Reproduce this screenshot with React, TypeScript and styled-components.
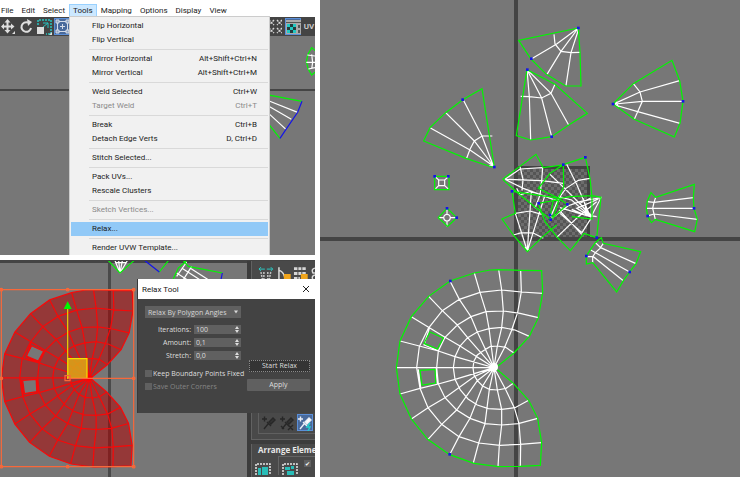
import React from "react";
import styled, { createGlobalStyle, css } from "styled-components";

const GlobalStyle = createGlobalStyle`
  * { box-sizing: border-box; }
  body { margin: 0; background: #fff; font-family: Roboto, "Noto Sans", sans-serif; font-size: 8px; color: #1c1c1c; }
  button, input, select { font: inherit; color: inherit; }
`;

const Page = styled.main`
  display: grid;
  grid-template-columns: minmax(0, 3fr) minmax(0, 4fr);
  grid-template-rows: 255px minmax(217px, 1fr);
  gap: 5px;
  min-height: 100vh;
`;
const EditorWindow = styled.section`
  position: relative;
  display: flex;
  flex-direction: column;
  overflow: hidden;
`;
const MenuBar = styled.nav`
  display: flex;
  height: 17px;
  padding-top: 4px;
  background: #fff;
`;
const MenuTitle = styled.button<{ $open?: boolean }>`
  height: 13px;
  padding: 0 3px;
  border: 1px solid transparent;
  background: none;
  line-height: 11px;
  white-space: nowrap;
  &:first-child { padding-left: 0; }
  ${(p) => p.$open && css`background: #cce8ff; border-color: #99d1ff;`}
`;
const Toolbar = styled.div`
  display: flex;
  align-items: center;
  justify-content: space-between;
  height: 19px;
  background: #444;
  color: #d2d2d2;
`;
const ToolGroup = styled.div`
  display: flex;
  align-items: center;
  gap: 2px;
`;
const ToolButton = styled.button<{ $active?: boolean; $text?: boolean }>`
  display: flex;
  align-items: center;
  justify-content: center;
  width: ${(p) => (p.$text ? "12px" : "16px")};
  height: 17px;
  padding: 0;
  border: 1px solid ${(p) => (p.$active ? "#5b8fd8" : "transparent")};
  background: ${(p) => (p.$active ? "#496a9c" : "none")};
  font-weight: 600;
  svg { flex: none; }
`;
const Viewport = styled.div`
  flex: 1;
  min-width: 0;
  background: #777;
  overflow: hidden;
`;
const Drawing = styled.svg`
  display: block;
  width: 100%;
  height: 100%;
  fill: none;
  stroke-width: 1.2px;
  path, circle { vector-effect: non-scaling-stroke; }
`;
const Canvas = styled.section`
  grid-column: 2;
  grid-row: 1 / 3;
  background: #777;
  overflow: hidden;
`;

const Menu = styled.div`
  position: absolute;
  top: 16px;
  left: 69px;
  width: 201px;
  padding: 2px 1px;
  border: 1px solid #ccc;
  background: #f1f1f1;
`;
const MenuItem = styled.button<{ $hot?: boolean }>`
  display: flex;
  align-items: center;
  justify-content: space-between;
  width: 100%;
  height: 14px;
  padding: 0 11px 0 21px;
  border: 0;
  background: ${(p) => (p.$hot ? "#91c9f7" : "none")};
  line-height: 14px;
  &:disabled { color: #8a8a8a; }
`;
const Separator = styled.hr`
  height: 1px;
  margin: 2px 0 2px 18px;
  border: 0;
  background: #d9d9d9;
`;

const RelaxWindow = styled(EditorWindow)`
  flex-direction: row;
  border-top: 1px solid #444;
  background: #777;
`;
const SidePanel = styled.aside`
  display: flex;
  flex-direction: column;
  gap: 4px;
  flex: none;
  width: 68px;
  padding-left: 4px;
  background: #3c3c3c;
  color: #e8e8e8;
  overflow: hidden;
`;
const Rollout = styled.div<{ $grow?: boolean }>`
  display: flex;
  flex-direction: column;
  justify-content: space-between;
  flex: ${(p) => (p.$grow ? "1" : "none")};
  height: ${(p) => (p.$grow ? "auto" : "179px")};
  padding: 5px 0 5px 6px;
  border-left: 1px solid #626262;
  border-bottom: 1px solid #626262;
  background: #494949;
`;
const IconRow = styled.div<{ $framed?: boolean }>`
  display: flex;
  gap: 2px;
  ${(p) => p.$framed && css`padding: 1px 0 2px 2px; border: 1px solid #606060; border-top: 0; border-right: 0;`}
`;
const RolloutTitle = styled.h2`
  display: flex;
  align-items: center;
  gap: 5px;
  height: 12px;
  margin: -5px 0 0 -5px;
  font-family: "Open Sans", "Noto Sans", sans-serif;
  font-size: 8px;
  line-height: 12px;
  font-weight: 700;
  white-space: nowrap;
`;
const ArrangeRow = styled.div`
  display: flex;
  align-items: flex-end;
  gap: 7px;
  margin-left: -3px;
`;
const ArrangeGroup = styled.div`
  display: flex;
  flex: 1;
  gap: 6px;
  height: 19px;
  padding: 3px 0 0 3px;
  border: 1px solid #646464;
  border-width: 1px 0 0 1px;
  svg { margin-top: 3px; }
`;

const Dialog = styled.div`
  position: absolute;
  top: 18px;
  right: 0;
  width: 178px;
  border-left: 1px solid #383838;
  background: #434343;
  color: #dedede;
`;
const TitleBar = styled.header`
  display: flex;
  align-items: center;
  justify-content: space-between;
  height: 20px;
  padding: 0 4px;
  background: #fff;
  color: #161616;
`;
const DialogTitle = styled.h1`
  margin: 0;
  font-size: 8px;
  font-weight: 400;
`;
const CloseButton = styled.button`
  display: flex;
  padding: 1px;
  border: 0;
  background: none;
`;
const DialogBody = styled.form`
  display: grid;
  grid-template-columns: 96px 1fr;
  column-gap: 6px;
  height: 114px;
  padding: 7px 5px 0 7px;
  font-family: "Open Sans", "Noto Sans", sans-serif;
  font-size: 7px;
`;
const Settings = styled.div`
  display: flex;
  flex-direction: column;
`;
const SelectBox = styled.div`
  position: relative;
  height: 12px;
  margin-bottom: 5px;
  svg { position: absolute; right: 3px; top: 4px; pointer-events: none; }
`;
const Select = styled.select`
  appearance: none;
  display: block;
  width: 100%;
  height: 12px;
  padding: 0 0 0 3px;
  border: 0;
  background: #606060;
  color: #d6d6d6;
`;
const Field = styled.label`
  display: flex;
  align-items: center;
  justify-content: flex-end;
  gap: 3px;
  height: 13px;
`;
const Spinner = styled.span`
  display: flex;
  align-items: center;
  width: 47px;
  height: 9px;
  padding-right: 2px;
  background: #606060;
`;
const NumberInput = styled.input`
  flex: 1;
  min-width: 0;
  height: 9px;
  padding: 0 2px;
  border: 0;
  background: none;
  line-height: 9px;
`;
const CheckField = styled.label<{ $off?: boolean }>`
  display: flex;
  align-items: center;
  gap: 1px;
  height: 13px;
  white-space: nowrap;
  color: ${(p) => (p.$off ? "#858585" : "inherit")};
`;
const FirstCheck = styled(CheckField)`
  margin-top: 5px;
`;
const CheckBox = styled.input`
  appearance: none;
  flex: none;
  display: grid;
  place-items: center;
  width: 7px;
  height: 7px;
  margin: 0;
  background: #606060;
  &:checked::after { content: "✔"; font-family: "DejaVu Sans", sans-serif; font-size: 6px; line-height: 7px; color: #fff; }
`;
const Actions = styled.div`
  display: flex;
  flex-direction: column;
  gap: 7px;
  padding-top: 54px;
`;
const ActionButton = styled.button<{ $focus?: boolean }>`
  height: 12px;
  padding: 0;
  border: ${(p) => (p.$focus ? "1px dotted #8a8a8a" : "0")};
  border-radius: 1px;
  background: ${(p) => (p.$focus ? "#343434" : "#606060")};
  line-height: 10px;
  margin-left: ${(p) => (p.$focus ? "2px" : "0")};
`;

type Entry = { label: string; keys?: string; off?: boolean; hot?: boolean };
const menuGroups: Entry[][] = [
  [{ label: "Flip Horizontal" }, { label: "Flip Vertical" }],
  [
    { label: "Mirror Horizontal", keys: "Alt+Shift+Ctrl+N" },
    { label: "Mirror Vertical", keys: "Alt+Shift+Ctrl+M" },
  ],
  [
    { label: "Weld Selected", keys: "Ctrl+W" },
    { label: "Target Weld", keys: "Ctrl+T", off: true },
  ],
  [
    { label: "Break", keys: "Ctrl+B" },
    { label: "Detach Edge Verts", keys: "D, Ctrl+D" },
  ],
  [{ label: "Stitch Selected..." }],
  [{ label: "Pack UVs..." }, { label: "Rescale Clusters" }],
  [{ label: "Sketch Vertices...", off: true }],
  [{ label: "Relax...", hot: true }],
  [{ label: "Render UVW Template..." }],
];

// Head mesh: outline, holes and inner wires, drawn on a grid of thirds of a pixel.
const headOutline =
  "M455 32L458 98L445 173L418 229L372 279L316 324L370 370L416 421L443 475L455 548L451 616L390 619L325 620L252 610L179 584L113 538L64 477L30 402L19 323L30 243L64 170L116 109L180 63L253 39L300 30L328 29L392 31Z";
const headHoles = "M120 216L160 234L142 267L102 250ZM90 331L135 328L137 369L96 375Z";
const headWires = [
  "M372 279L347 262L322 258L300 260L280 272L262 285L252 303L249 323L252 345L262 362L278 378L298 388L322 390L348 385L370 370",
  "M418 229L375 210L335 202L297 206L262 216L233 233L210 258L195 290L190 323L195 358L211 390L234 417L262 435L295 446L335 448L375 443L416 421",
  "M445 173L390 160L340 153L288 155L243 170L202 195L165 232L145 273L140 323L145 372L165 413L200 450L240 475L285 491L335 495L385 491L443 475",
  "M458 100L394 96L335 90L270 97L208 118L157 152L115 205L88 260L80 323L90 385L114 443L155 493L207 530L266 549L330 556L390 553L455 548",
  "M392 32L394 95L383 157L364 213L343 264L312 323L345 385L373 443L387 491L392 553L391 619",
  "M326 29L335 90L340 153L335 203L322 258L312 323L322 390L335 448L335 495L328 556L324 620",
  "M253 39L270 97L288 155L297 205L312 323L298 388L285 491L266 549L250 609",
  "M180 63L208 118L243 170L262 216L312 323L278 378L240 475L207 530L179 584",
  "M116 109L157 152L202 195L233 233L312 323L262 362L200 450L155 493L114 538",
  "M64 170L165 232L210 258L312 323L252 350L165 413L114 443L64 477",
  "M30 243L88 258L145 273L195 290L312 323L195 358L145 372L90 385L30 402",
  "M19 323H312",
  "M118 205L102 255L148 273M85 328L92 382M138 325L142 372",
].join("");

function Wire({ x, y, green, white = "", dots = [] }: { x: number; y: number; green: string; white?: string; dots?: number[][] }) {
  return (
    <g transform={`translate(${x} ${y}) scale(.33333)`}>
      <path d={white} stroke="#fff" />
      <path d={green} stroke="#00f800" />
      {dots.map(([cx, cy]) => (
        <rect key={`${cx}-${cy}`} x={cx - 4} y={cy - 4} width="8" height="8" fill="#1414e8" />
      ))}
    </g>
  );
}

function UnwrapDrawing() {
  return (
    <Drawing aria-label="Unwrapped UV layout">
      <defs>
        <pattern id="checks" x="195" y="166" width="6" height="6" patternUnits="userSpaceOnUse">
          <rect width="6" height="6" fill="#6c6c6c" />
          <path d="M0 0H3V6H6V3H0Z" fill="#555" />
        </pattern>
      </defs>
      <rect x="195" y="166" width="75" height="72" fill="url(#checks)" />
      <path d="M197 167.5H268.5V238" stroke="#424242" strokeWidth="3" />
      <rect x="194" y="0" width="4" height="100%" fill="#444" />
      <rect x="0" y="237" width="100%" height="4" fill="#444" />
      <Wire
        x={95} y={20}
        green="M490 24L311 61L348 117L394 163L452 198H498L495 97ZM336 149L304 347L347 360L410 350L461 315L517 280L420 193ZM238 441L201 206L143 239L92 278L45 323L26 363L153 415L230 441ZM594 252L655 191L771 121L794 182L804 244L795 310L778 351L658 298Z"
        white="M490 24L425 72L350 116M490 24L438 94L396 163M490 30L468 98L453 197M417 43L420 72L438 94L468 98L495 97M336 149L343 230L347 360M336 149L380 234L410 350M336 149L408 220L461 315M317 229L343 230L380 234L408 220L420 193M235 438L201 348L145 240M235 438L178 363L92 278M235 438L165 390L45 323M232 348H201L178 363L165 388L155 415M238 435L222 438M600 250L675 216L794 182M600 252L682 244H804M600 255L668 275L795 310M655 191L675 216L682 244L668 275L658 298M604 245L610 262"
        dots={[[490, 24], [349, 116], [337, 149], [410, 350], [143, 239], [238, 441], [594, 252], [804, 244]]}
      />
      <Wire
        x={170} y={145}
        green="M38 103L138 28L160 68L220 60L221 125L205 160L175 155L66 139M38 103L90 150L165 210L182 224L232 178L205 160L145 130L180 85L220 59L286 37L300 100L306 155V222L245 215M145 175L184 168L206 165M145 175L165 230L200 275L241 317L282 265L320 278L333 157L306 152L240 155L200 162M66 139L76 205L36 222L70 270L112 320L155 278L200 240M181 210L190 165L206 168L190 215Z"
        white="M45 103L90 72L158 68M45 103L155 107L220 115M45 103L100 130L208 170M90 65L99 103L96 137M158 68L155 107L150 150L135 190M112 318L76 205M112 318L124 138M112 318L165 150M76 205L120 198L155 208M70 270L95 263L130 264L160 280M104 308L120 315M180 88L230 136L303 210M230 58L260 118L300 212M300 100L265 106L228 130L205 162L182 215M303 216L333 158L270 170L235 182L182 222M303 216L245 165L205 155M303 216L270 175L302 159M303 216L260 190L325 162M303 216L210 188M320 170L265 215L200 277M320 215L282 209L245 193M303 220L276 263L241 232L210 205M207 195L248 238L275 268M280 160L290 200M80 130L90 150L124 138"
        dots={[[66, 139], [146, 175], [182, 224], [180, 210], [220, 59], [286, 37], [232, 178], [320, 278]]}
      />
      <Wire
        x={105} y={165}
        green="M29 34H72V74H29ZM66 129L95 158L68 184L40 158Z"
        white="M29 34L41 45H59L72 34M41 45V62H59V45M41 62L29 74M59 62L72 74M66 129V148M66 168V184M40 158H56M76 158H95M66 148A10 10 0 1 0 66.1 148"
        dots={[[29, 34], [70, 34], [66, 130], [95, 158]]}
      />
      <Wire
        x={260} y={170}
        green="M213 68L227 82L343 43L340 83L342 115L352 148L344 185L226 148L214 158L203 138L199 115L202 93ZM64 203L70 220L182 245L168 281L149 306L130 332L110 366L38 278L19 282V258L32 238L46 218Z"
        white="M202 95L222 97L340 83M199 115H342M205 137L222 132L352 148M227 82L222 97L218 115L222 132L226 148M46 218L62 233L168 281M32 240L149 306M22 260H40L130 332M70 220L60 235L47 247L38 260V278"
        dots={[[342, 115], [203, 138], [149, 306], [19, 258]]}
      />
      <Wire x={70} y={260} green={headOutline + headHoles} white={headWires} dots={[[181, 63], [179, 583]]} />
      <circle cx="174" cy="367" r="4" fill="#fff" />
    </Drawing>
  );
}

function TopDrawing() {
  return (
    <Drawing aria-label="UV editor">
      <rect x="0" y="53" width="100%" height="2" fill="#444" />
      <g transform="translate(0 -36) scale(.33333)">
        <path d="M800 300L893 337M800 315L874 358M800 335L858 388" stroke="#fff" />
        <path d="M800 284L906 304M800 365L840 415M945 152L935 143L924 163L919 185L925 208L935 225L945 217" stroke="#00f800" />
        <path d="M906 304L893 337L858 388L840 415" stroke="#1414e8" />
        <path d="M922 165L945 168M919 187H945M925 207L945 203M935 163L938 187L935 207" stroke="#fff" />
      </g>
    </Drawing>
  );
}

function SelectionDrawing() {
  return (
    <Drawing aria-label="Selected UV shell">
      <rect width="100%" height="2" fill="#444" />
      <rect x="108" width="3" height="100%" fill="#4a4a4a" />
      <g transform="translate(0 -3) scale(.33333)">
        <path d="M360 45L345 8M360 45L356 8M360 45L367 8M360 45L382 8M345 14H380M570 30L625 65M545 30L610 72M530 45L585 80M560 12L530 55M575 25L550 65" stroke="#fff" />
        <path d="M325 8L360 45L402 8M478 42L505 8M550 8L565 25L667 45M560 8L535 30L520 62" stroke="#00f800" />
        <path d="M435 8L478 42M667 45L662 70" stroke="#1414e8" />
        <g transform="translate(-13 69) scale(.9)">
          <path d={headOutline + headHoles} fill="#af0000" fillOpacity=".53" fillRule="evenodd" />
          <path d={headWires + headOutline + headHoles} stroke="#f80808" />
          <circle cx="314" cy="323" r="9" fill="red" />
        </g>
        <path d="M203 302H261V361H203Z" fill="#dba018" fillOpacity=".9" stroke="#f4e000" />
        <path d="M4 95H401V626H4ZM203 361H401" stroke="#f8683a" />
        <path d="M203 361V152" stroke="#e8d200" />
        <path d="M191 153L203 130L215 153Z" fill="#00f800" />
        <path d="M195 353H210V368H195Z" stroke="#f8683a" />
        {[[4, 95], [203, 95], [401, 95], [4, 361], [401, 361], [4, 626], [203, 626], [401, 626]].map(([cx, cy]) => (
          <circle key={`${cx}-${cy}`} cx={cx} cy={cy} r="4" stroke="#f8683a" fill="#f8683a" fillOpacity=".6" />
        ))}
      </g>
    </Drawing>
  );
}

const MoveIcon = () => (
  <svg width="14" height="15" viewBox="0 0 14 15" fill="#dedede">
    <path d="M6.5 0L9.5 3.5H7.5V6.5H10V4.5L13.5 7.5L10 10.5V8.5H7.5V11H9.5L6.5 14.5L3.5 11H5.5V8.5H3V10.5L0 7.5L3 4.5V6.5H5.5V3.5H3.5ZM14 12V15H11Z" />
  </svg>
);
const RotateIcon = () => (
  <svg width="13" height="15" viewBox="0 0 13 15" fill="none" stroke="#dedede" strokeWidth="2">
    <path d="M8 3.5A4.8 4.8 0 1 0 11 9" />
    <path d="M7 0L12 3L8 7Z" fill="#dedede" stroke="none" />
  </svg>
);
const ScaleIcon = () => (
  <svg width="15" height="16" viewBox="0 0 15 16" fill="none">
    <path d="M1 6V1H14V15H9" stroke="#27c4c0" strokeWidth="1.5" strokeDasharray="2 1" />
    <path d="M6 4H11V9M11 4L6 8" stroke="#27c4c0" />
    <path d="M0 8H7V15H0ZM15 13V16H12Z" fill="#dedede" />
  </svg>
);
const FreeformIcon = () => (
  <svg width="15" height="15" viewBox="0 0 15 15" fill="none" stroke="#d5dce8">
    <path d="M2.5 2.5H12.5V12.5H2.5ZM7.5 5V10M5 7.5H10" />
    <path d="M1 1H4V4H1ZM11 1H14V4H11ZM1 11H4V14H1ZM11 11H14V14H11Z" fill="#8aa0c0" />
  </svg>
);
const CrossesIcon = () => (
  <svg width="13" height="15" viewBox="0 0 13 15" stroke="#d8d8d8" strokeWidth="1.4" strokeDasharray="2 1">
    <path d="M0 1L5 6M5 1L0 6M8 1L13 6M13 1L8 6M0 9L5 14M5 9L0 14M8 9L13 14M13 9L8 14" />
  </svg>
);
const CheckerWindowIcon = () => (
  <svg width="15" height="15" viewBox="0 0 15 15">
    <path d="M0 1H15V15H0Z" fill="#aaa" />
    <path d="M0 3H15V4H0Z" fill="#555" />
    <path d="M1 5H10V14H1Z" fill="#243b3d" />
    <path d="M1 5H4V8H7V5H10V8H7V11H10V14H7V11H4V14H1V11H4V8H1Z" fill="#20c8c2" />
    <path d="M12 6H14V9H12ZM12 11H14V14H12Z" fill="#555" />
  </svg>
);
const ArrowsIcon = () => (
  <svg width="16" height="16" viewBox="0 0 16 16" fill="none">
    <path d="M1 3H7M9 3H15M3 1L1 3L3 5M13 1L15 3L13 5" stroke="#2cc9c4" />
    <path d="M3 6L5 16M6 6V16M10 6V16M13 6L11 16" stroke="#c8c8c8" strokeWidth="1.5" strokeDasharray="2 1" />
  </svg>
);
const AngleIcon = () => (
  <svg width="16" height="16" viewBox="0 0 16 16" fill="none">
    <path d="M3 1V14H9M3 4Q9 6 9 14" stroke="#ddd" strokeWidth="1.5" />
    <path d="M8 8H15V16H8Z" fill="#f0a51c" />
  </svg>
);
const RowsIcon = () => (
  <svg width="16" height="16" viewBox="0 0 16 16">
    <path d="M1 1H13V4H1ZM1 6H13V9H1ZM1 11H7V14H1Z" fill="#d7d7d7" />
    <path d="M5 0V15M9 0V9" stroke="#4a4a4a" />
    <path d="M8 8H15V16H8Z" fill="#f0a51c" />
  </svg>
);
const CurlIcon = () => (
  <svg width="4" height="16" viewBox="0 0 4 16" fill="none" stroke="#ddd" strokeWidth="1.5">
    <path d="M4 2Q0 3 2 7H4M4 9Q0 10 2 14H4" />
  </svg>
);
const PinIcon = ({ lit = false, crossed = false }: { lit?: boolean; crossed?: boolean }) => (
  <svg width="16" height="16" viewBox="0 0 16 16" fill="none" stroke={lit ? "#e9eef6" : "#272727"} strokeWidth="1.4">
    <path d="M1 4H6M3.5 1.5V6.5M3 14L7 9M6 7L10 11" />
    <path d="M8 7L12 3L14 5L10 9Z" fill={lit ? "#fff" : "#333"} />
    {crossed && <path d="M9 10L14 15M14 10L9 15M2 11L5 14" />}
    {lit && <path d="M13 8L10 12H13L11 16" stroke="#23d0cc" />}
  </svg>
);
const PackIcon = ({ split = false }: { split?: boolean }) => (
  <svg width="16" height="12" viewBox="0 0 16 12" fill="none">
    <path d="M1 12V1H15V12" stroke="#e6e6e6" strokeWidth="1.5" strokeDasharray="2 1" />
    <path d={split ? "M3 4H8V7H3ZM9 3H12V6H9ZM5 8H12V12H5Z" : "M3 5H6V12H3ZM7 4H13V12H7Z"} fill="#29bdb8" />
  </svg>
);
const DownIcon = () => (
  <svg width="4" height="4" viewBox="0 0 5 4"><path d="M0 0H5L2.5 4Z" fill="#d8d8d8" /></svg>
);
const SpinIcon = () => (
  <svg width="4" height="7" viewBox="0 0 4 7"><path d="M0 3L2 0L4 3ZM0 4H4L2 7Z" fill="#ddd" /></svg>
);

const spinners = [["Iterations:", "100"], ["Amount:", "0,1"], ["Stretch:", "0,0"]];

export default function App() {
  return (
    <>
      <GlobalStyle />
      <Page>
        <EditorWindow>
          <MenuBar>
            {["File", "Edit", "Select", "Tools", "Mapping", "Options", "Display", "View"].map((t) => (
              <MenuTitle key={t} $open={t === "Tools"}>{t}</MenuTitle>
            ))}
          </MenuBar>
          <Toolbar>
            <ToolGroup>
              <ToolButton aria-label="Move"><MoveIcon /></ToolButton>
              <ToolButton aria-label="Rotate"><RotateIcon /></ToolButton>
              <ToolButton aria-label="Scale"><ScaleIcon /></ToolButton>
              <ToolButton aria-label="Freeform" $active><FreeformIcon /></ToolButton>
            </ToolGroup>
            <ToolGroup>
              <ToolButton aria-label="Pattern"><CrossesIcon /></ToolButton>
              <ToolButton aria-label="Checker" $active><CheckerWindowIcon /></ToolButton>
              <ToolButton $text>UV</ToolButton>
            </ToolGroup>
          </Toolbar>
          <Viewport><TopDrawing /></Viewport>
          <Menu>
            {menuGroups.map((group, i) => (
              <React.Fragment key={group[0].label}>
                {i > 0 && <Separator />}
                {group.map((e) => (
                  <MenuItem key={e.label} disabled={e.off} $hot={e.hot}>
                    <span>{e.label}</span>
                    {e.keys && <span>{e.keys}</span>}
                  </MenuItem>
                ))}
              </React.Fragment>
            ))}
          </Menu>
        </EditorWindow>

        <RelaxWindow>
          <Viewport><SelectionDrawing /></Viewport>
          <SidePanel>
            <Rollout>
              <IconRow><ArrowsIcon /><AngleIcon /><RowsIcon /><CurlIcon /></IconRow>
              <IconRow $framed>
                <ToolButton aria-label="Pin" disabled><PinIcon /></ToolButton>
                <ToolButton aria-label="Unpin" disabled><PinIcon crossed /></ToolButton>
                <ToolButton aria-label="Auto-pin" $active><PinIcon lit /></ToolButton>
              </IconRow>
            </Rollout>
            <Rollout $grow>
              <RolloutTitle><DownIcon />Arrange Eleme</RolloutTitle>
              <ArrangeRow>
                <PackIcon />
                <ArrangeGroup>
                  <PackIcon split />
                  <CheckBox type="checkbox" aria-label="Rescale" defaultChecked />
                </ArrangeGroup>
              </ArrangeRow>
            </Rollout>
          </SidePanel>
          <Dialog role="dialog" aria-label="Relax Tool">
            <TitleBar>
              <DialogTitle>Relax Tool</DialogTitle>
              <CloseButton aria-label="Close">
                <svg width="8" height="8" viewBox="0 0 8 8" stroke="#222"><path d="M1 1L7 7M7 1L1 7" /></svg>
              </CloseButton>
            </TitleBar>
            <DialogBody onSubmit={(e) => e.preventDefault()}>
              <Settings>
                <SelectBox>
                  <Select aria-label="Relax method"><option>Relax By Polygon Angles</option></Select>
                  <DownIcon />
                </SelectBox>
                {spinners.map(([label, value]) => (
                  <Field key={label}>
                    {label}
                    <Spinner><NumberInput defaultValue={value} /><SpinIcon /></Spinner>
                  </Field>
                ))}
                <FirstCheck><CheckBox type="checkbox" />Keep Boundary Points Fixed</FirstCheck>
                <CheckField $off><CheckBox type="checkbox" disabled />Save Outer Corners</CheckField>
              </Settings>
              <Actions>
                <ActionButton type="button" $focus>Start Relax</ActionButton>
                <ActionButton type="button">Apply</ActionButton>
              </Actions>
            </DialogBody>
          </Dialog>
        </RelaxWindow>

        <Canvas><UnwrapDrawing /></Canvas>
      </Page>
    </>
  );
}
